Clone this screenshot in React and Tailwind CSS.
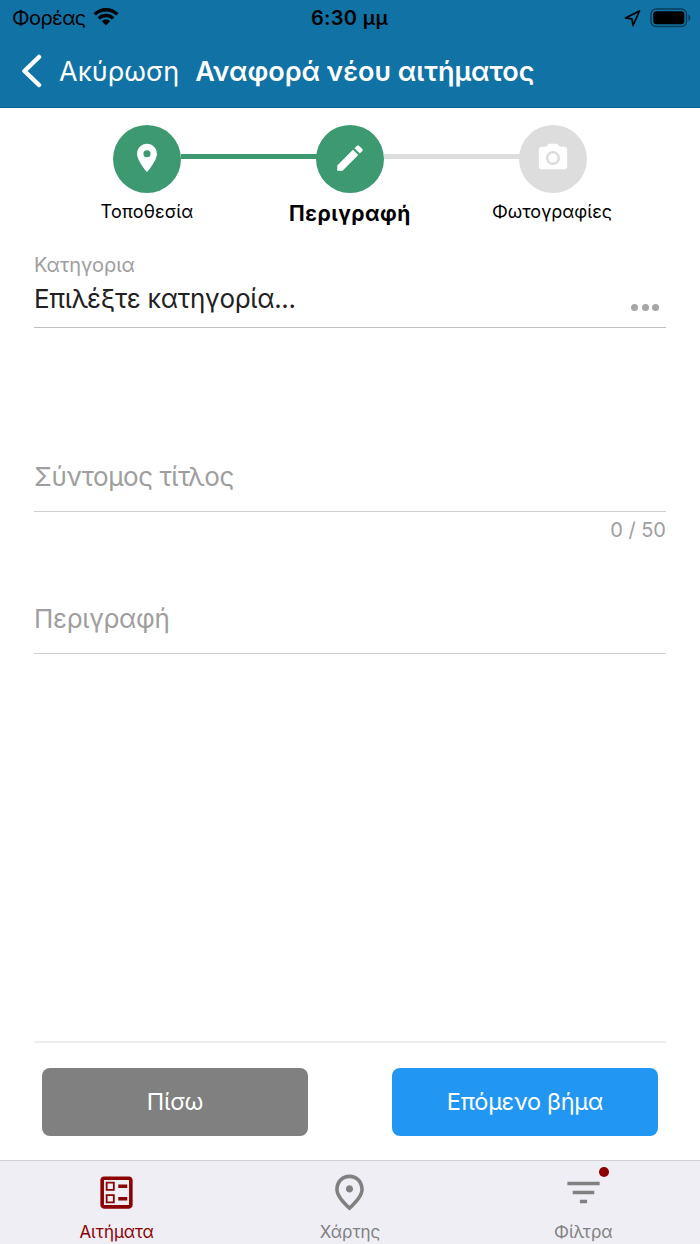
import React from "react";
import {
  MdCameraAlt,
  MdEdit,
  MdFilterList,
  MdOutlineBallot,
  MdOutlinePlace,
  MdPlace,
} from "react-icons/md";

const steps = [
  { label: "Τοποθεσία", icon: MdPlace, circle: "bg-[#3d9970]", text: "text-[18px] leading-[38px] tracking-[0.15px]" },
  { label: "Περιγραφή", icon: MdEdit, circle: "bg-[#3d9970]", text: "text-[21px] leading-[42px] font-bold tracking-[0.5px]" },
  { label: "Φωτογραφίες", icon: MdCameraAlt, circle: "bg-[#dddddd]", text: "mr-[2px] text-[18px] leading-[38px]" },
];

const tabs = [
  { label: "Αιτήματα", icon: MdOutlineBallot, color: "text-[#8b0000]" },
  { label: "Χάρτης", icon: MdOutlinePlace, color: "text-[#808080]" },
  { label: "Φίλτρα", icon: MdFilterList, color: "text-[#808080]", badge: true },
];

function StatusBar() {
  return (
    <div className="grid h-9 grid-cols-3 items-center pl-3 pr-[9px] text-xl leading-9 text-black">
      <div className="flex items-center gap-[7px]">
        <span className="tracking-[-0.6px]">Φορέας</span>
        <svg width="26" height="20" viewBox="0 0 26 20" className="mb-0.5">
          <path d="M0.5 6.2C7.5 -0.8 18.5 -0.8 25.5 6.2L23.1 8.6C17.5 3.1 8.5 3.1 2.9 8.6Z" />
          <path d="M4.6 10.2C9.3 5.6 16.7 5.6 21.4 10.2L18.9 12.7C15.6 9.5 10.4 9.5 7.1 12.7Z" />
          <path d="M8.8 14.3C11.2 12 14.8 12 17.2 14.3L13 18.6Z" />
        </svg>
      </div>
      <span className="pr-1 text-center font-semibold tracking-[0.35px]">6:30 μμ</span>
      <div className="flex items-center justify-end gap-[9px]">
        <svg width="17" height="17" viewBox="0 0 17 17" fill="none" stroke="black" strokeWidth="1.7" strokeLinejoin="round">
          <path d="M1.5 8L15.5 1L9 15.5L8 8.8Z" />
        </svg>
        <svg width="41" height="20" viewBox="0 0 41 20" className="-mt-px">
          <rect x="1" y="1" width="35.5" height="17.5" rx="5" fill="none" stroke="black" strokeOpacity="0.45" strokeWidth="1.5" />
          <rect x="3.3" y="3.3" width="31" height="13" rx="3" />
          <path d="M38.3 6.5C41 7.7 41 11.8 38.3 13Z" fillOpacity="0.45" />
        </svg>
      </div>
    </div>
  );
}

function NavBar() {
  return (
    <div className="flex h-[71px] items-center pl-[21px] text-white">
      <svg width="22" height="34" viewBox="0 0 22 34" fill="none" stroke="white" strokeWidth="4.5" strokeLinecap="round" strokeLinejoin="round" className="-mt-px">
        <path d="M18 3L3.5 17L18 31" />
      </svg>
      <span className="ml-4 text-[27px] leading-[72px]">Ακύρωση</span>
      <h1 className="ml-4 text-[27px] font-semibold leading-[72px]">Αναφορά νέου αιτήματος</h1>
    </div>
  );
}

function Stepper() {
  return (
    <div className="flex h-[127px] justify-center pt-[17px]">
      {steps.map((step, i) => {
        const Icon = step.icon;
        return (
          <React.Fragment key={step.label}>
            {i > 0 && (
              <div className={`mt-[29px] h-[5px] w-[136px] shrink-0 ${i === 1 ? "bg-[#3d9970]" : "bg-[#dddddd]"}`} />
            )}
            <div className="flex w-[67px] shrink-0 flex-col items-center">
              <div className={`flex size-[67.5px] shrink-0 items-center justify-center rounded-full text-white ${step.circle}`}>
                <Icon className="mr-px mb-px size-[34px]" />
              </div>
              <span className={`whitespace-nowrap text-black ${step.text}`}>{step.label}</span>
            </div>
          </React.Fragment>
        );
      })}
    </div>
  );
}

function Form() {
  return (
    <div className="px-[34px]">
      <div className="flex h-[93px] items-end justify-between border-b border-[#bdbdbd]">
        <div className="flex h-full flex-col pt-[18px]">
          <span className="text-xl leading-6 tracking-[-0.1px] text-[#9e9e9e]">Κατηγορια</span>
          <span className="text-[26px] leading-[43px] tracking-[-0.3px] text-[#212121]">Επιλέξτε κατηγορία...</span>
        </div>
        <div className="mr-[7px] mb-4 flex gap-[3.5px]">
          <span className="size-[7px] rounded-full bg-[#a6a6a6]" />
          <span className="size-[7px] rounded-full bg-[#a6a6a6]" />
          <span className="size-[7px] rounded-full bg-[#a6a6a6]" />
        </div>
      </div>
      <div className="mt-[113px] h-[71px] border-b border-[#cfcfcf] text-[26px] leading-[72px] tracking-[-0.4px] text-[#9e9e9e]">
        Σύντομος τίτλος
      </div>
      <div className="h-9 text-right text-xl leading-9 text-[#9e9e9e]">0 / 50</div>
      <div className="mt-[35px] h-[71px] border-b border-[#cfcfcf] text-[26px] leading-[72px] tracking-[-0.3px] text-[#9e9e9e]">
        Περιγραφή
      </div>
    </div>
  );
}

export default function App() {
  return (
    <div className="flex h-[1244px] w-[700px] flex-col overflow-hidden bg-white font-['Inter','Noto_Sans',sans-serif]">
      <header className="h-[108px] shrink-0 border-b border-[#0c6594] bg-[#1072a5]">
        <StatusBar />
        <NavBar />
      </header>
      <main className="flex flex-1 flex-col">
        <Stepper />
        <Form />
        <div className="mx-[34px] mt-auto flex h-[119px] justify-between border-t-2 border-[#eeeeee] px-2 pt-[25px] text-[23.5px] tracking-[-0.3px] text-white">
          <button className="h-[68px] w-[266px] rounded-lg bg-[#808080]">Πίσω</button>
          <button className="h-[68px] w-[266px] rounded-lg bg-[#2196f3]">Επόμενο βήμα</button>
        </div>
      </main>
      <nav className="grid h-[84px] shrink-0 grid-cols-3 border-t border-[#cfcfd4] bg-[#efeef5]">
        {tabs.map((tab) => {
          const Icon = tab.icon;
          return (
            <div key={tab.label} className={`flex flex-col items-center pt-[10px] ${tab.color}`}>
              <div className="relative">
                <Icon className="size-[43px]" />
                {tab.badge && <span className="absolute -top-[4px] left-[37px] size-[10px] rounded-full bg-[#8b0000]" />}
              </div>
              <span className="text-[17px] leading-[36px] tracking-[-0.05px]">{tab.label}</span>
            </div>
          );
        })}
      </nav>
    </div>
  );
}
